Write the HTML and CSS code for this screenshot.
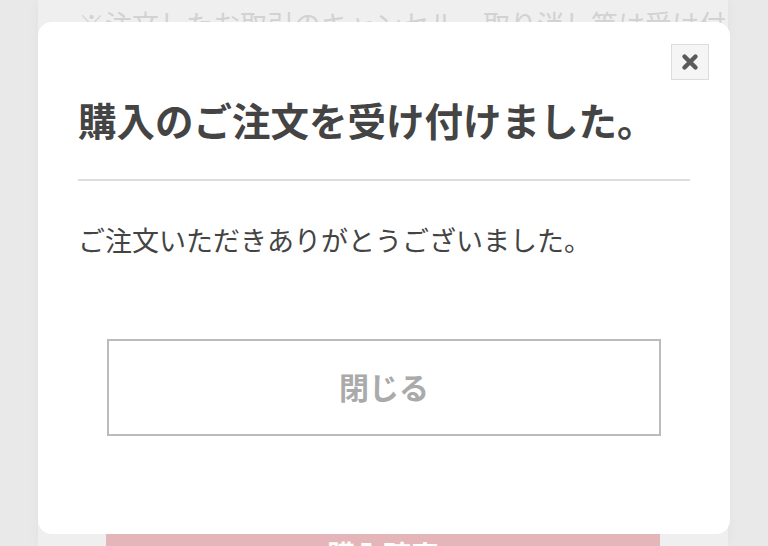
FILE: index.html
```html
<!DOCTYPE html>
<html lang="ja">
<head>
  <meta charset="UTF-8">
  <meta name="viewport" content="width=device-width, initial-scale=1.0">
  <title>購入完了</title>
  <link rel="stylesheet" href="styles.css">
</head>
<body>
  <div class="page">
    <p class="note">※注文したお取引のキャンセル・取り消し等は受け付けいたしません。</p>
    <div class="spacer"></div>
    <button class="buy">購入確定</button>
  </div>

  <div class="overlay">
    <div class="modal">
      <button class="close" aria-label="閉じる">
        <svg width="18" height="18" viewBox="0 0 18 18">
          <path d="M3.5 3.5 L14.5 14.5 M14.5 3.5 L3.5 14.5" stroke="#5a5a5a" stroke-width="4.4" stroke-linecap="round"/>
        </svg>
      </button>
      <h1 class="title">購入のご注文を受け付けました。</h1>
      <p class="message">ご注文いただきありがとうございました。</p>
      <button class="btn-close">閉じる</button>
    </div>
  </div>
</body>
</html>
```

FILE: styles.css
```css
body {
  margin: 0;
  font-family: "Noto Sans CJK JP", "Noto Sans", sans-serif;
  background-color: #e9e9e9;
  height: 546px;
  overflow: hidden;
}
.page {
  width: 690px;
  height: 546px;
  margin-left: 38px;
  background-color: #efefef;
  box-shadow: 0 0 12px rgba(0, 0, 0, 0.04);
  display: flex;
  flex-direction: column;
  align-items: center;
}
.note {
  margin: 0;
  padding: 8px 0 0 40px;
  align-self: stretch;
  font-size: 27px;
  line-height: 32px;
  color: #d2d2d2;
  white-space: nowrap;
  overflow: hidden;
}
.spacer {
  flex: 1;
}
.buy {
  width: 554px;
  height: 40px;
  margin-bottom: -28px;
  padding: 0;
  border: none;
  background-color: #e4b6b9;
  color: #fff;
  font-family: inherit;
  font-size: 28px;
  line-height: 20px;
  font-weight: bold;
}
.overlay {
  position: absolute;
  top: 0;
  left: 0;
  width: 768px;
  height: 546px;
}
.modal {
  position: absolute;
  top: 22px;
  left: 38px;
  width: 692px;
  height: 512px;
  box-sizing: border-box;
  padding: 0 40px;
  background: #fff;
  border-radius: 14px;
  display: flex;
  flex-direction: column;
}
.close {
  position: absolute;
  top: 22px;
  right: 21px;
  width: 38px;
  height: 36px;
  padding: 0;
  border: 1px solid #dcdcdc;
  background: #f5f5f5;
  display: flex;
  align-items: center;
  justify-content: center;
}
.title {
  margin: 72px 0 0;
  padding-bottom: 35px;
  border-bottom: 2px solid #dddddd;
  font-size: 38.5px;
  line-height: 50px;
  font-weight: bold;
  color: #444;
  white-space: nowrap;
}
.message {
  margin: 41px 0 0;
  font-size: 27px;
  line-height: 36px;
  color: #444;
}
.btn-close {
  margin: 81px 0 0 29px;
  width: 554px;
  height: 97px;
  border: 2px solid #bbbbbb;
  background: #fff;
  font-family: inherit;
  font-size: 30px;
  line-height: 40px;
  padding: 0 0 4px;
  font-weight: bold;
  color: #aaaaaa;
}
```
